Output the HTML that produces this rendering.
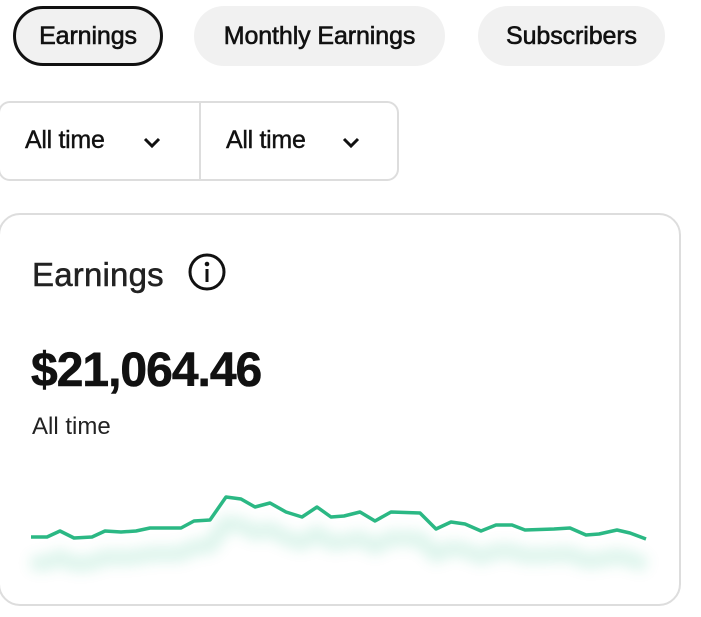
<!DOCTYPE html><html><head><style>
body{margin:0;width:701px;height:617px;overflow:hidden;background:#fff;font-family:"Liberation Sans",sans-serif;color:#111;position:relative}
.pill{position:absolute;top:6px;height:60px;border-radius:30px;background:#f1f1f1;font-size:25px;line-height:60px;text-align:center;box-sizing:border-box;-webkit-text-stroke:0.6px #111;letter-spacing:-0.1px}
.dd{position:absolute;top:101px;left:-2px;width:401px;height:80px;border:2px solid #ddd;border-radius:12px;box-sizing:border-box}
.dd span{position:absolute;top:23px;font-size:25px;-webkit-text-stroke:0.4px #111;letter-spacing:-0.3px}
.card{position:absolute;left:-2px;top:213px;width:683px;height:393px;border:2px solid #ddd;border-radius:22px;box-sizing:border-box}
</style></head><body>
<div class="pill" style="left:13px;width:150px;border:3px solid #111;line-height:54px">Earnings</div>
<div class="pill" style="left:194px;width:251px">Monthly Earnings</div>
<div class="pill" style="left:478px;width:187px">Subscribers</div>
<div class="dd">
<span style="left:25px">All time</span>
<svg style="position:absolute;left:142px;top:33px" width="20" height="14"><path d="M3 3l7 7 7-7" fill="none" stroke="#111" stroke-width="3"/></svg>
<div style="position:absolute;left:199px;top:0;width:2px;height:76px;background:#ddd"></div>
<span style="left:226px">All time</span>
<svg style="position:absolute;left:341px;top:33px" width="20" height="14"><path d="M3 3l7 7 7-7" fill="none" stroke="#111" stroke-width="3"/></svg>
</div>
<div class="card"></div>
<div style="position:absolute;left:32px;top:256px;font-size:33px;color:#222;-webkit-text-stroke:0.5px #222;letter-spacing:0.2px">Earnings</div>
<svg style="position:absolute;left:187px;top:252px" width="40" height="40"><circle cx="20" cy="20" r="17" fill="none" stroke="#111" stroke-width="3"/><circle cx="20" cy="12" r="2.3" fill="#111"/><rect x="18.5" y="17" width="3" height="13" fill="#111"/></svg>
<div style="position:absolute;left:31px;top:343px;font-size:48px;font-weight:bold;letter-spacing:-1px;-webkit-text-stroke:0.6px #111">$21,064.46</div>
<div style="position:absolute;left:32px;top:413px;font-size:24px;color:#222">All time</div>
<svg style="position:absolute;left:0;top:0" width="701" height="617">
<defs><filter id="b" x="-10%" y="-80%" width="120%" height="260%"><feGaussianBlur stdDeviation="7"/></filter></defs>
<polyline transform="translate(0,26)" filter="url(#b)" opacity="0.18" fill="none" stroke="#2fbf8a" stroke-width="14" points="31,537 47,537 60,531 74,538 92,537 105,531 121,532 136,531 150,528 181,528 194,521 210,520 226,497 241,499 255,507 270,503 286,512 302,517 317,507 331,517 344,516 360,512 375,521 391,512 420,513 436,529 451,522 465,524 481,531 496,525 512,525 525,530 554,529 570,528 586,535 599,534 617,530 630,533 646,539"/>
<polyline fill="none" stroke="#2bb884" stroke-width="3.5" stroke-linejoin="round" points="31,537 47,537 60,531 74,538 92,537 105,531 121,532 136,531 150,528 181,528 194,521 210,520 226,497 241,499 255,507 270,503 286,512 302,517 317,507 331,517 344,516 360,512 375,521 391,512 420,513 436,529 451,522 465,524 481,531 496,525 512,525 525,530 554,529 570,528 586,535 599,534 617,530 630,533 646,539"/>
</svg>
</body></html>
